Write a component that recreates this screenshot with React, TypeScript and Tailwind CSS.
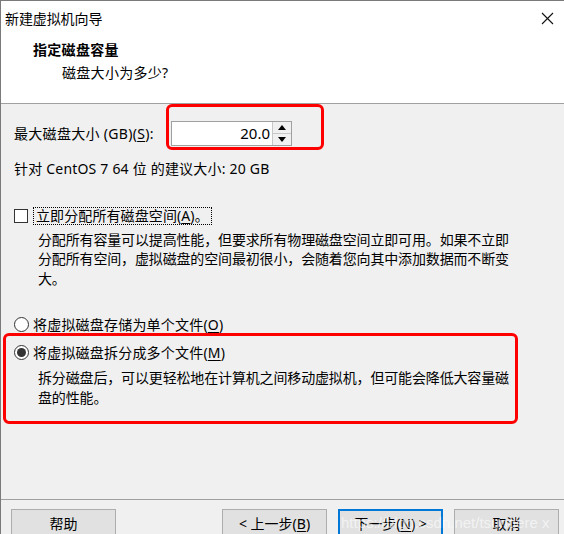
import { ReactNode } from "react";

const FONT = "font-['Noto_Sans','Noto_Sans_CJK_SC',sans-serif]";

function Key({ children }: { children: ReactNode }) {
  return <span className="underline underline-offset-2">{children}</span>;
}

function Radio({ checked }: { checked?: boolean }) {
  return (
    <span className="flex h-[15px] w-[15px] shrink-0 items-center justify-center rounded-full border border-[#333] bg-white">
      {checked ? <span className="h-[9px] w-[9px] rounded-full bg-[#333]" /> : null}
    </span>
  );
}

function WizButton({ children, primary }: { children: ReactNode; primary?: boolean }) {
  return (
    <div
      className={`flex h-[29px] w-[105px] items-center justify-center bg-[#e1e1e1] text-[14px] ${
        primary ? "border-2 border-[#0078d7]" : "border border-[#adadad]"
      }`}
    >
      {children}
    </div>
  );
}

export default function App() {
  return (
    <div
      className={`relative flex h-[534px] w-[564px] flex-col overflow-hidden border-l border-t border-[#7a7a7a] bg-[#f0f0f0] text-black ${FONT}`}
    >
      {/* title bar */}
      <div className="flex h-[33px] items-center justify-between bg-white pl-[4px] pr-[10px] text-[14px] leading-[19px]">
        <span className="mt-[1px] tracking-[-0.1px]">新建虚拟机向导</span>
        <svg width="13" height="13" viewBox="0 0 13 13" className="mt-[1px]">
          <path d="M1 1 L12 12 M12 1 L1 12" stroke="#111" strokeWidth="1.1" fill="none" />
        </svg>
      </div>

      {/* header */}
      <div className="h-[70px] border-b border-[#a0a0a0] bg-white pl-[32px] text-[14px] leading-[19px]">
        <div className="mt-[6px] font-bold tracking-[0.3px]">指定磁盘容量</div>
        <div className="mt-[4px] pl-[29px] tracking-[0.3px]">磁盘大小为多少?</div>
      </div>

      {/* body */}
      <div className="flex flex-1 flex-col pl-[13px] text-[14px] leading-[19.5px]">
        <div className="mt-[17px] flex h-[25px] items-center">
          <span className="w-[157px] shrink-0 whitespace-nowrap tracking-[0.3px]">
            最大磁盘大小 (GB)(<Key>S</Key>):
          </span>
          <div className="flex h-[25px] border border-[#a0a0a0]">
            <div className="flex w-[100px] items-center justify-end bg-white pr-[2px] text-[15px]">20.0</div>
            <div className="flex w-[19px] flex-col border-l border-[#c8c8c8] bg-[#f0f0f0]">
              <div className="flex flex-1 items-center justify-center border-b border-[#c8c8c8]">
                <span className="h-0 w-0 border-x-[4px] border-b-[5px] border-x-transparent border-b-black" />
              </div>
              <div className="flex flex-1 items-center justify-center">
                <span className="h-0 w-0 border-x-[4px] border-t-[5px] border-x-transparent border-t-black" />
              </div>
            </div>
          </div>
        </div>

        <div className="mt-[13px] tracking-[0.2px]">针对 CentOS 7 64 位 的建议大小: 20 GB</div>

        <div className="mt-[28px] flex items-center">
          <span className="h-[14px] w-[14px] shrink-0 border border-[#333] bg-white" />
          <span className="ml-[5px] border border-dotted border-black px-[2px] leading-[16px] tracking-[0.1px]">
            立即分配所有磁盘空间(<Key>A</Key>)。
          </span>
        </div>
        <div className="mt-[5px] pl-[24px] tracking-[-0.15px]">
          <div className="whitespace-nowrap">分配所有容量可以提高性能，但要求所有物理磁盘空间立即可用。如果不立即</div>
          <div className="whitespace-nowrap">分配所有空间，虚拟磁盘的空间最初很小，会随着您向其中添加数据而不断变</div>
          <div>大。</div>
        </div>

        <div className="mt-[27px] flex items-center">
          <Radio />
          <span className="ml-[4px] tracking-[0.2px]">
            将虚拟磁盘存储为单个文件(<Key>O</Key>)
          </span>
        </div>
        <div className="mt-[8px] flex items-center">
          <Radio checked />
          <span className="ml-[4px] tracking-[0.2px]">
            将虚拟磁盘拆分成多个文件(<Key>M</Key>)
          </span>
        </div>
        <div className="mt-[6px] pl-[24px] tracking-[-0.15px]">
          <div className="whitespace-nowrap">拆分磁盘后，可以更轻松地在计算机之间移动虚拟机，但可能会降低大容量磁</div>
          <div>盘的性能。</div>
        </div>
      </div>

      {/* footer */}
      <div className="h-[35px] border-t border-[#a0a0a0]">
        <div className="mt-[9px] flex pl-[10px] pr-[5px]">
          <WizButton>帮助</WizButton>
          <div className="flex-1" />
          <div className="flex gap-[11px]">
            <WizButton>
              &lt; 上一步(<Key>B</Key>)
            </WizButton>
            <WizButton primary>
              下一步(<Key>N</Key>) &gt;
            </WizButton>
            <WizButton>取消</WizButton>
          </div>
        </div>
      </div>

      {/* annotation marks */}
      <div className="pointer-events-none absolute left-[165px] top-[103px] h-[46px] w-[158px] rounded-[6px] border-[3px] border-[#ff0000]" />
      <div className="pointer-events-none absolute left-[2px] top-[332px] h-[91px] w-[515px] rounded-[6px] border-[3px] border-[#ff0000]" />
      <div className="pointer-events-none absolute left-[340px] top-[511px] whitespace-nowrap font-['Liberation_Sans',sans-serif] text-[15px] leading-[22px] text-white/60">
        https://blog.csdn.net/tsundere x
      </div>
    </div>
  );
}
